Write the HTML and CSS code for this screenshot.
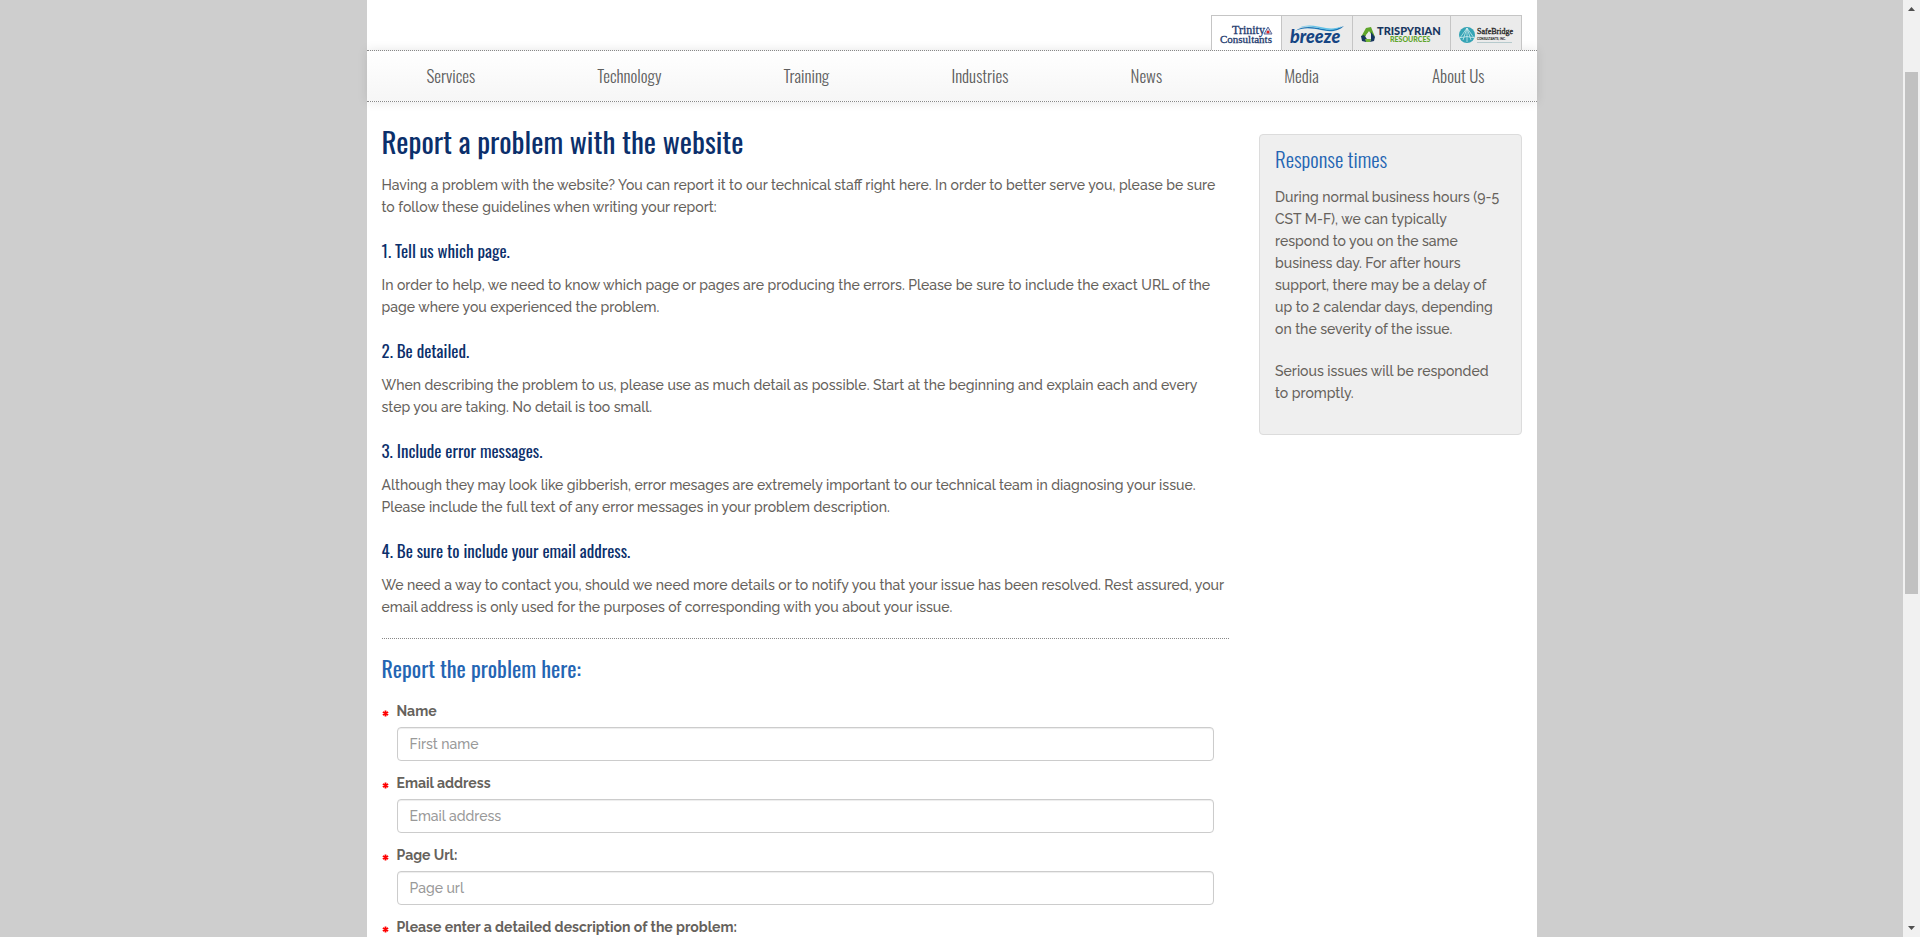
FILE: index.html
```html
<!DOCTYPE html>
<html lang="en">
<head>
<meta charset="utf-8">
<title>Report a problem with the website</title>
<link rel="stylesheet" href="styles.css">
</head>
<body>
<div class="viewport">
  <div class="page">
    <header class="brands">
      <nav class="brand-tabs" aria-label="Companies">
        <a class="brand brand-active" href="#" aria-label="Trinity Consultants">
          <svg width="53" height="20" viewBox="0 0 53 20">
            <g class="logo-serif" fill="#1d3a6d" stroke="#1d3a6d" stroke-width=".3"><text x="12" y="9" font-size="12">Trinity</text><text x="0" y="18" font-size="11">Consultants</text></g>
            <path d="M48 2 L52 9 H44 Z" fill="#d5d9e8" stroke="#5c6d9c"/><circle cx="48" cy="7" r="1.500" fill="#d22"/>
          </svg>
        </a>
        <a class="brand" href="#" aria-label="Breeze">
          <svg width="54" height="20" viewBox="0 0 54 20">
            <path d="M5 6 C15 -1 26 3 35 4 C43 5 49 3 54 1 C48 7 39 7 31 5 C22 3 13 2 5 6Z" fill="#1c75b5"/>
            <path d="M9 3 C18 -2 28 2 36 3 C43 4 48 3 52 1 C47 5 40 6 33 4 C24 2 17 0 9 3Z" fill="#63c3e8"/>
            <text class="logo-heavy" x="0" y="18" font-size="18" font-style="italic" fill="#164583">breeze</text>
          </svg>
        </a>
        <a class="brand" href="#" aria-label="Trispyrian Resources">
          <svg width="81" height="20" viewBox="0 0 81 20">
            <path d="M5 3 L10 2 L14 12 L10 9 L8 6 L4 12 H0 Z" fill="#5fa52b"/>
            <path d="M0 11 L3 10 L6 14 L5 17 L1 16Z M10 7 L14 12 L13 16 L9 17 L10 14Z" fill="#17365f"/>
            <path d="M4 14 H10 L9 17 H5Z" fill="#72b43a"/>
            <path d="M5 10 L8 7 L10 11 L9 14 H6Z" fill="#ebebeb"/>
            <g class="logo-heavy"><text x="16" y="10" font-size="11" fill="#17365f">TRISPYRIAN</text><text x="29" y="17" font-size="7" fill="#5fa52b">RESOURCES</text></g>
          </svg>
        </a>
        <a class="brand" href="#" aria-label="SafeBridge Consultants, Inc.">
          <svg width="54" height="20" viewBox="0 0 54 20">
            <circle cx="8" cy="10" r="8" fill="#35a4b5"/>
            <path d="M8 3 V17 M8 3 L1 13 M8 3 L4 15 M8 3 L12 15 M8 3 L15 13 M0 13 Q8 10 16 13" fill="none" stroke="#d9f1f2" stroke-width=".7"/>
            <text class="logo-serif" x="18" y="9" font-size="8" fill="#222" stroke="#222" stroke-width=".3">SafeBridge</text>
            <text class="logo-heavy" x="18" y="15" font-size="3" fill="#222">CONSULTANTS, INC.</text>
            <path d="M18 17.500 H53" stroke="#9fbcc0" stroke-width=".7"/>
          </svg>
        </a>
      </nav>
    </header>
    <nav class="main-nav" aria-label="Main">
      <a href="#">Services</a><a href="#">Technology</a><a href="#">Training</a><a href="#">Industries</a><a href="#">News</a><a href="#">Media</a><a href="#">About Us</a>
    </nav>
    <div class="columns">
      <main class="content">
        <h1>Report a problem with the website</h1>
        <p>Having a problem with the website? You can report it to our technical staff right here. In order to better serve you, please be sure to follow these guidelines when writing your report:</p>
        <h2>1. Tell us which page.</h2>
        <p>In order to help, we need to know which page or pages are producing the errors. Please be sure to include the exact URL of the page where you experienced the problem.</p>
        <h2>2. Be detailed.</h2>
        <p>When describing the problem to us, please use as much detail as possible. Start at the beginning and explain each and every step you are taking. No detail is too small.</p>
        <h2>3. Include error messages.</h2>
        <p>Although they may look like gibberish, error mesages are extremely important to our technical team in diagnosing your issue. Please include the full text of any error messages in your problem description.</p>
        <h2>4. Be sure to include your email address.</h2>
        <p>We need a way to contact you, should we need more details or to notify you that your issue has been resolved. Rest assured, your email address is only used for the purposes of corresponding with you about your issue.</p>
        <form class="report">
          <h3>Report the problem here:</h3>
          <div class="field"><svg class="required" viewBox="0 0 8 8"><path d="M4 .5 V7.500 M1 2.200 L7 5.800 M7 2.200 L1 5.800"/></svg><label for="name">Name</label><input id="name" type="text" placeholder="First name"></div>
          <div class="field"><svg class="required" viewBox="0 0 8 8"><path d="M4 .5 V7.500 M1 2.200 L7 5.800 M7 2.200 L1 5.800"/></svg><label for="email">Email address</label><input id="email" type="email" placeholder="Email address"></div>
          <div class="field"><svg class="required" viewBox="0 0 8 8"><path d="M4 .5 V7.500 M1 2.200 L7 5.800 M7 2.200 L1 5.800"/></svg><label for="url">Page Url:</label><input id="url" type="text" placeholder="Page url"></div>
          <div class="field"><svg class="required" viewBox="0 0 8 8"><path d="M4 .5 V7.500 M1 2.200 L7 5.800 M7 2.200 L1 5.800"/></svg><label for="description">Please enter a detailed description of the problem:</label><textarea id="description" rows="6"></textarea></div>
        </form>
      </main>
      <aside class="side">
        <div class="well">
          <h3>Response times</h3>
          <p>During normal business hours (9-5 CST M-F), we can typically respond to you on the same business day. For after hours support, there may be a delay of up to 2 calendar days, depending on the severity of the issue.</p>
          <p>Serious issues will be responded to promptly.</p>
        </div>
      </aside>
    </div>
  </div>
</div>
<div class="scrollbar" aria-hidden="true">
  <svg width="17" height="17" viewBox="0 0 17 17"><path d="M5 11 L8.500 7 L12 11Z" fill="#505050"/></svg>
  <div class="track"><div class="thumb"></div></div>
  <svg width="17" height="17" viewBox="0 0 17 17"><path d="M5 6 L8.500 10 L12 6Z" fill="#505050"/></svg>
</div>
</body>
</html>
```
FILE: styles.css
```css
* { box-sizing: border-box; }

body {
  margin: 0;
  display: flex;
  height: 100vh;
  overflow: hidden;
  background: #cecece;
  color: #66625c;
  font: 500 14px/22px Raleway, Lato, sans-serif;
}

h1, h2, h3, .main-nav {
  font-family: Oswald, "Liberation Sans Narrow", Roboto, sans-serif;
  font-weight: 400;
}

a { color: inherit; text-decoration: none; }

.viewport { flex: 1; min-width: 0; overflow: hidden; }

.page {
  max-width: 1170px;
  min-height: 100%;
  margin: 0 auto;
  background: #fff;
}

.brands { display: flex; justify-content: flex-end; padding: 15px 15px 0; }

.brand-tabs { display: flex; border: 1px solid #c5c5c5; border-bottom: 0; }

.brand {
  display: flex;
  align-items: center;
  height: 34px;
  padding: 4px 8px 0;
  background: #ebebeb;
}
.brand + .brand { border-left: 1px solid #c5c5c5; }
.brand-active { background: #fff; }
.brand svg { overflow: visible; }

.logo-serif { font-family: "Liberation Serif", serif; }
.logo-heavy { font-family: Lato, sans-serif; font-weight: 900; }

.main-nav {
  display: flex;
  justify-content: space-between;
  padding: 0 52px 0 60px;
  border-top: 1px dotted #888;
  border-bottom: 1px dotted #888;
  background: linear-gradient(#fff, #f6f6f6);
  box-shadow: 0 0 10px rgba(0, 0, 0, .1);
  color: #5f5f5f;
  font-size: 17px;
  font-weight: 300;
  line-height: 50px;
}
.main-nav a:last-child { margin-left: -9px; }

.columns {
  display: grid;
  grid-template-columns: 3fr 1fr;
  padding-top: 20px;
}
.content { padding: 0 15px; }
.side { padding: 12px 15px 0; }

h1 { margin: 0 0 14px; color: #0b2f6b; font-size: 29px; line-height: 38px; }
h2 { margin: 22px 0 12px; color: #0b2f6b; font-size: 17px; line-height: 22px; }
h3 { margin: 0 0 15px; color: #2465b3; font-size: 22px; line-height: 24px; }
p { margin: 0; }

.report { margin-top: 20px; border-top: 1px dotted #888; padding-top: 18px; }
.report h3 { margin-bottom: 23px; line-height: 22px; }

.field {
  display: grid;
  grid-template-columns: 15px 1fr;
  row-gap: 7px;
  margin-bottom: 13px;
  padding-right: 15px;
}
.field label { font-weight: 700; line-height: 18px; }
.field input, .field textarea {
  grid-column: 2;
  width: 100%;
  height: 34px;
  padding: 6px 12px;
  border: 1px solid #ccc;
  border-radius: 4px;
  background: #fff;
  box-shadow: inset 0 1px 1px rgba(0, 0, 0, .075);
  color: #555;
  font: inherit;
}
.field textarea { height: 140px; }
::placeholder { color: #999; opacity: 1; }
.required {
  width: 7px;
  height: 7px;
  margin-top: 8px;
  stroke: #f00;
  stroke-width: 2;
}

.well {
  padding: 12px 19px 10px 15px;
  border: 1px solid #dcdcdc;
  border-radius: 4px;
  background: #efefef;
}
.well h3 { font-size: 21px; font-weight: 300; }
.well p { margin-bottom: 20px; }

.scrollbar { display: flex; flex-direction: column; width: 17px; background: #f1f1f1; }
.track { flex: 1; padding: 55px 2px 0; }
.thumb { height: 61.6%; background: #c1c1c1; }
```
